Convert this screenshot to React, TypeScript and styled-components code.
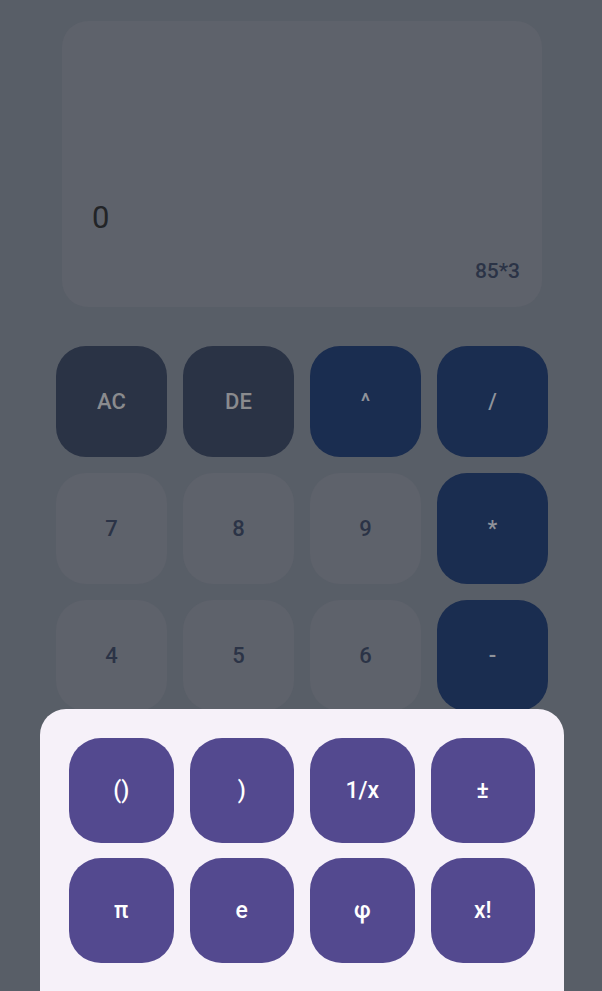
import React from "react";
import styled, { createGlobalStyle } from "styled-components";

const Global = createGlobalStyle`
  html, body {
    margin: 0;
    padding: 0;
    background: #585e67;
    font-family: Roboto, "Noto Sans", Arial, sans-serif;
  }
  * { box-sizing: border-box; }
`;

const Page = styled.div`
  width: 602px;
  height: 991px;
  overflow: hidden;
  background: #585e67;
  display: flex;
  flex-direction: column;
  align-items: center;
  padding: 21px 0 0 2px;
`;

const Display = styled.div`
  width: 480px;
  height: 286px;
  border-radius: 26px;
  background: #5e626b;
  display: flex;
  flex-direction: column;
  justify-content: flex-end;
  padding: 0 22px 24px 30px;
`;

const Result = styled.div`
  font-size: 31px;
  line-height: 36px;
  color: #222427;
  margin-bottom: 23px;
`;

const Expression = styled.div`
  align-self: flex-end;
  font-size: 21px;
  font-weight: 500;
  line-height: 24px;
  color: #2b3346;
`;

const Keypad = styled.div`
  margin-top: 39px;
  display: grid;
  grid-template-columns: repeat(4, 111px);
  grid-auto-rows: 111px;
  gap: 16px;
`;

type Kind = "util" | "op" | "num";

const bg: Record<Kind, string> = {
  util: "#2a3345",
  op: "#1a2d50",
  num: "#5e626b",
};
const fg: Record<Kind, string> = {
  util: "#8a8b8e",
  op: "#8f939b",
  num: "#2b3346",
};

const Key = styled.div<{ $kind: Kind }>`
  border-radius: 30px;
  background: ${(p) => bg[p.$kind]};
  color: ${(p) => fg[p.$kind]};
  display: flex;
  align-items: center;
  justify-content: center;
  font-size: 22px;
  font-weight: 500;
`;

const Sheet = styled.div`
  position: fixed;
  left: 40px;
  width: 524px;
  top: 709px;
  bottom: 0;
  background: #f6f1f9;
  border-radius: 26px 26px 0 0;
  padding: 29px 29px 0 29px;
`;

const SheetGrid = styled.div`
  display: grid;
  grid-template-columns: repeat(4, 104.5px);
  grid-auto-rows: 105px;
  column-gap: 16px;
  row-gap: 15px;
`;

const SheetKey = styled.div`
  border-radius: 32px;
  background: #53498f;
  color: #ffffff;
  display: flex;
  align-items: center;
  justify-content: center;
  font-size: 23px;
  font-weight: 500;
`;

const keys: [string, Kind][] = [
  ["AC", "util"],
  ["DE", "util"],
  ["^", "op"],
  ["/", "op"],
  ["7", "num"],
  ["8", "num"],
  ["9", "num"],
  ["*", "op"],
  ["4", "num"],
  ["5", "num"],
  ["6", "num"],
  ["-", "op"],
];

const extras = ["()", ")", "1/x", "±", "π", "e", "φ", "x!"];

export default function App() {
  return (
    <>
      <Global />
      <Page>
        <Display>
          <Result>0</Result>
          <Expression>85*3</Expression>
        </Display>
        <Keypad>
          {keys.map(([label, kind]) => (
            <Key key={label} $kind={kind}>
              {label}
            </Key>
          ))}
        </Keypad>
      </Page>
      <Sheet>
        <SheetGrid>
          {extras.map((e) => (
            <SheetKey key={e}>{e}</SheetKey>
          ))}
        </SheetGrid>
      </Sheet>
    </>
  );
}
